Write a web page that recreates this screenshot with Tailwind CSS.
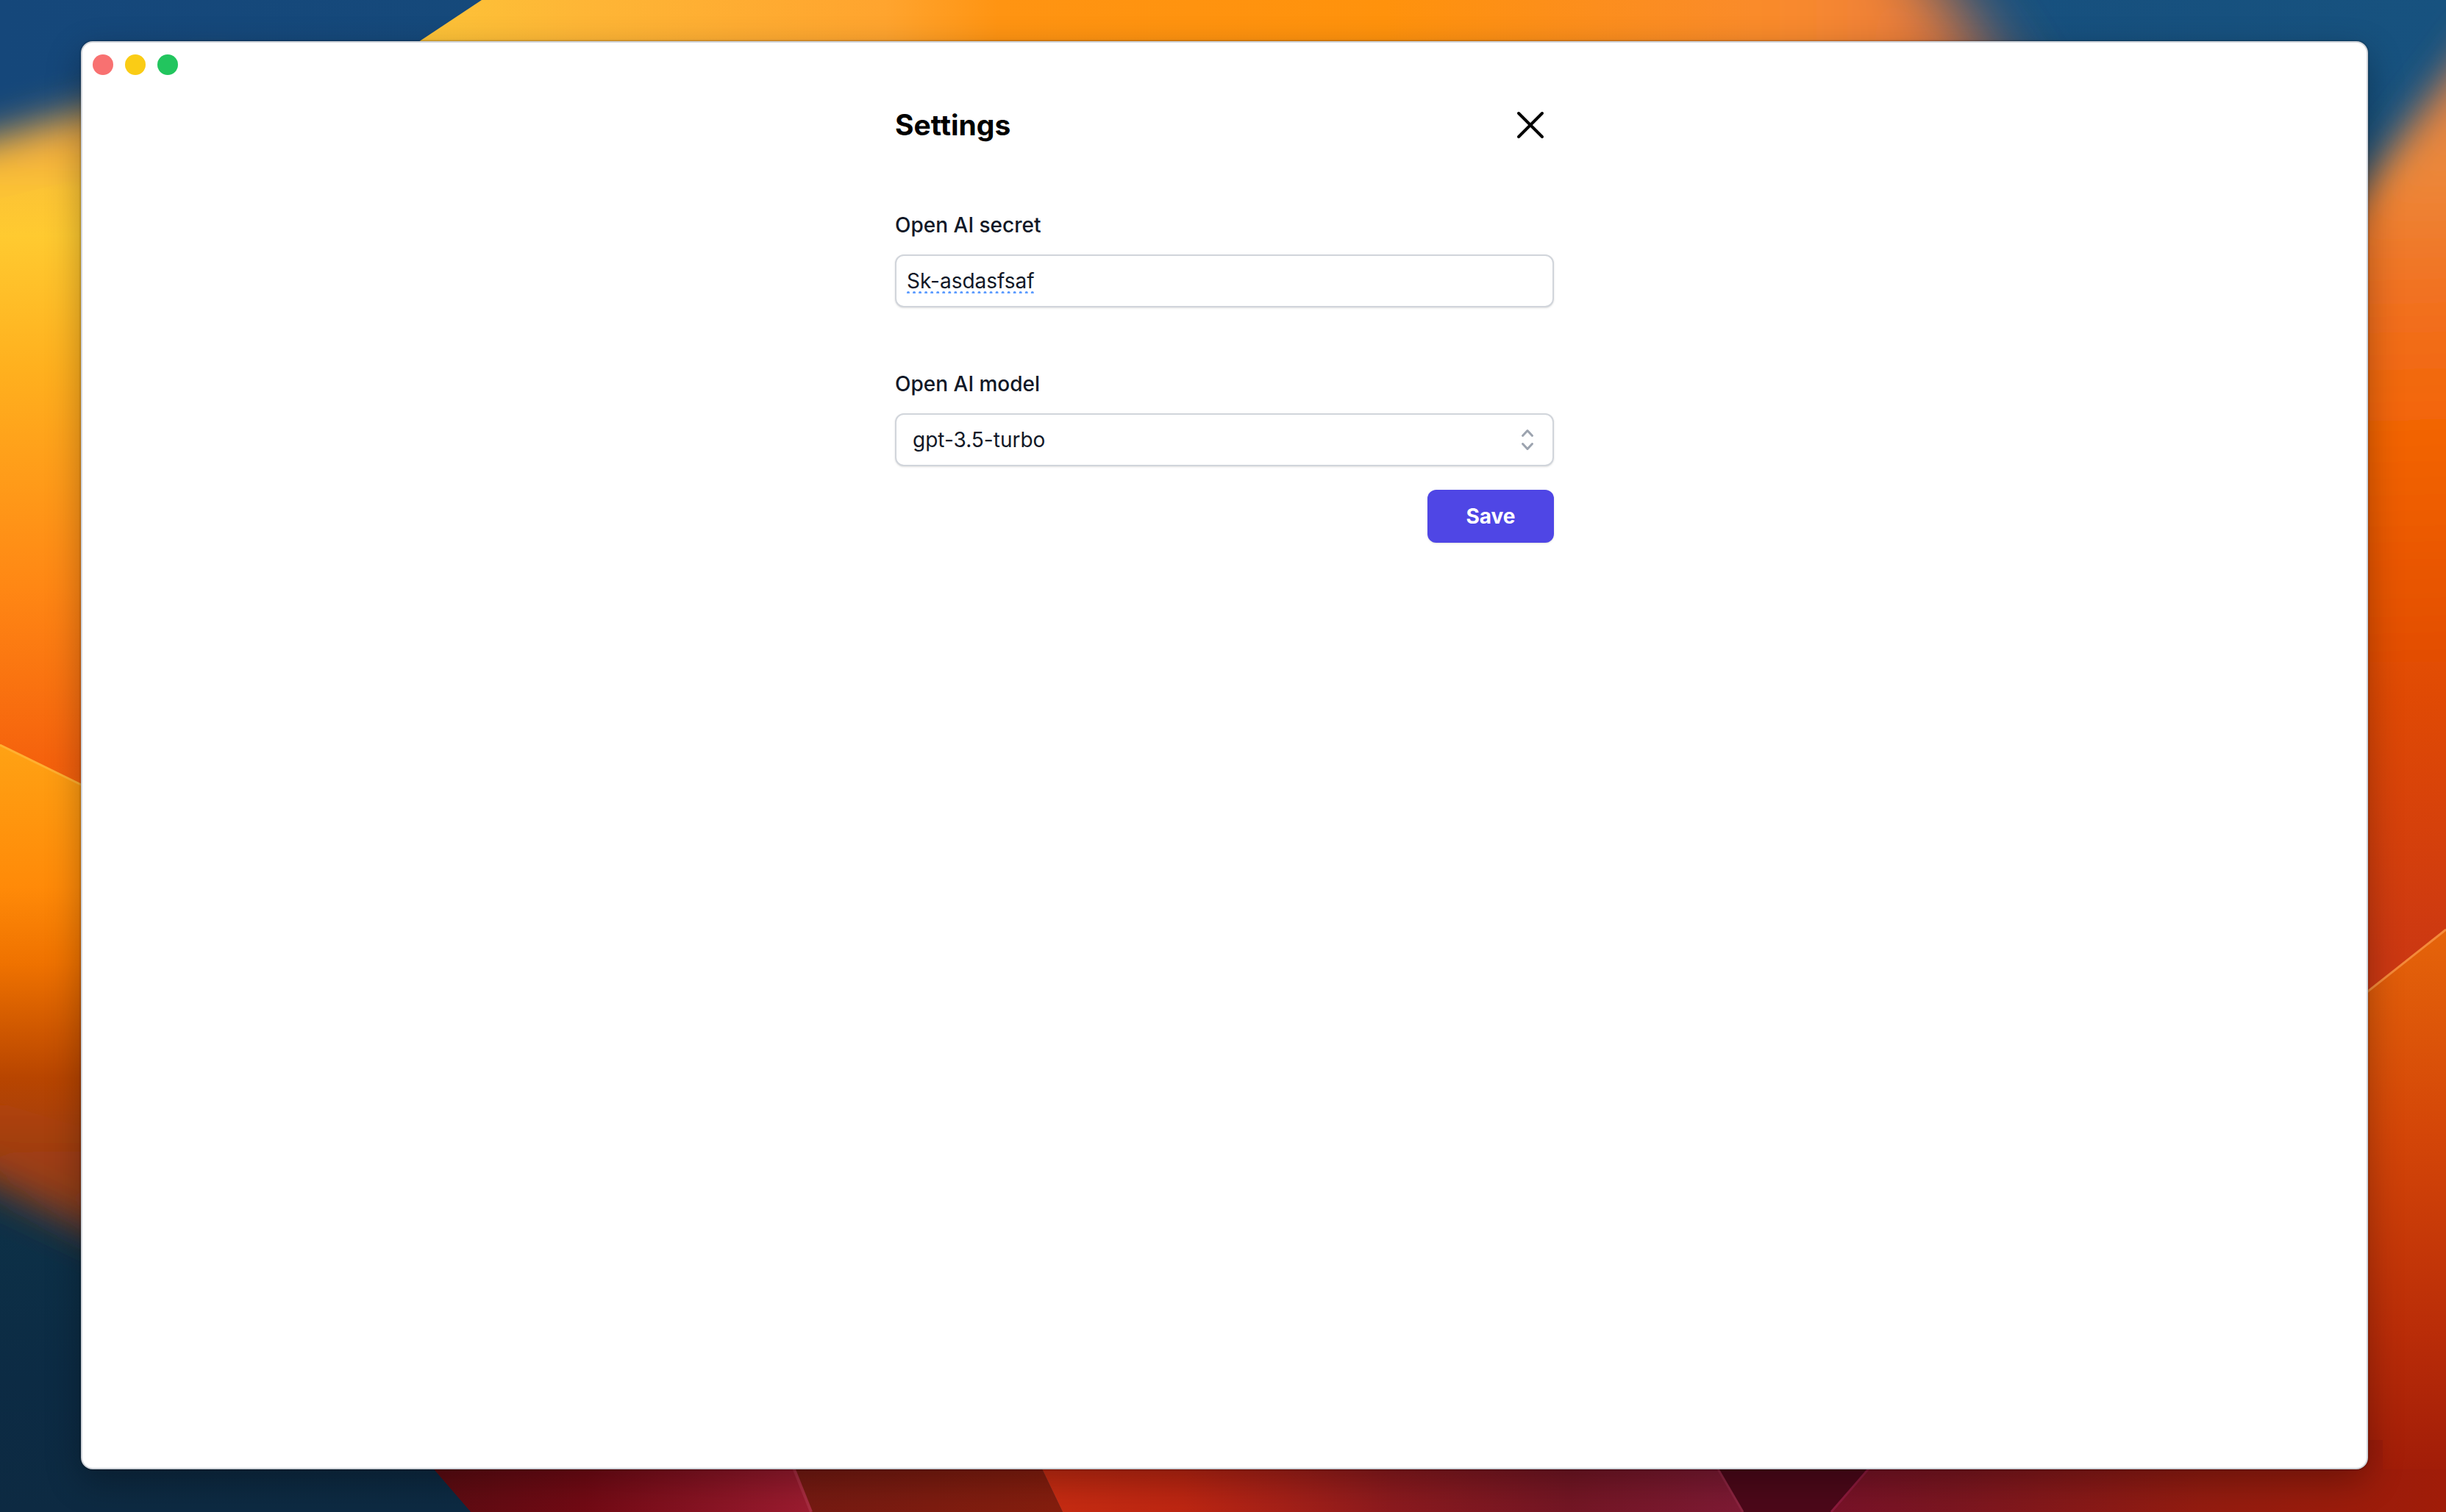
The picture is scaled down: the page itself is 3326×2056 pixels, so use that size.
<!DOCTYPE html>
<html lang="en">
<head>
<meta charset="utf-8">
<meta name="viewport" content="width=device-width, initial-scale=1">
<title>Settings</title>
<script src="https://cdn.jsdelivr.net/npm/@tailwindcss/browser@4"></script>
</head>
<body class="relative isolate flex min-h-screen flex-col overflow-x-hidden bg-[#15477a] pt-14 pr-[106px] pb-[58px] pl-[110px] font-['Inter',sans-serif] text-[28px] leading-10 text-[#111827]">

<!-- Desktop wallpaper -->
<svg class="absolute inset-0 -z-10 h-full w-full" viewBox="0 0 3326 2056" preserveAspectRatio="none" aria-hidden="true">
  <defs>
    <linearGradient id="sky" gradientUnits="userSpaceOnUse" x1="0" y1="0" x2="3326" y2="0">
      <stop offset="0" stop-color="#15477a"/><stop offset="1" stop-color="#17527f"/>
    </linearGradient>
    <linearGradient id="sea" gradientUnits="userSpaceOnUse" x1="0" y1="1600" x2="0" y2="2056">
      <stop offset="0" stop-color="#0d3248"/><stop offset=".6" stop-color="#0c2b44"/><stop offset="1" stop-color="#0d2a42"/>
    </linearGradient>
    <linearGradient id="leftUpper" gradientUnits="userSpaceOnUse" x1="0" y1="190" x2="0" y2="1060">
      <stop offset="0" stop-color="#f0a840"/><stop offset=".08" stop-color="#fcc434"/><stop offset=".15" stop-color="#ffca30"/><stop offset=".36" stop-color="#ffb01e"/><stop offset=".7" stop-color="#ff8714"/><stop offset="1" stop-color="#f45e0c"/>
    </linearGradient>
    <linearGradient id="leftLower" gradientUnits="userSpaceOnUse" x1="0" y1="1012" x2="0" y2="1660">
      <stop offset="0" stop-color="#ffa214"/><stop offset=".3" stop-color="#ff8a08"/><stop offset=".46" stop-color="#ef7200"/><stop offset=".7" stop-color="#b84500"/><stop offset=".88" stop-color="#9c3c14"/><stop offset="1" stop-color="#8a3c20"/>
    </linearGradient>
    <linearGradient id="top" gradientUnits="userSpaceOnUse" x1="570" y1="0" x2="2760" y2="0">
      <stop offset="0" stop-color="#fdc338"/><stop offset=".1" stop-color="#feb636"/><stop offset=".29" stop-color="#ffa42e"/><stop offset=".36" stop-color="#ff9412"/><stop offset=".6" stop-color="#ff920c"/><stop offset=".86" stop-color="#f98a2e"/><stop offset="1" stop-color="#d86c48"/>
    </linearGradient>
    <linearGradient id="rightUpper" gradientUnits="userSpaceOnUse" x1="3300" y1="110" x2="3326" y2="1300">
      <stop offset="0" stop-color="#d98048"/><stop offset=".1" stop-color="#ec883a"/><stop offset=".25" stop-color="#f27020"/><stop offset=".4" stop-color="#f36404"/><stop offset=".7" stop-color="#e04a04"/><stop offset="1" stop-color="#cc3812"/>
    </linearGradient>
    <linearGradient id="rightLower" gradientUnits="userSpaceOnUse" x1="0" y1="1263" x2="0" y2="2056">
      <stop offset="0" stop-color="#e5640a"/><stop offset=".35" stop-color="#d44608"/><stop offset=".7" stop-color="#b92c08"/><stop offset="1" stop-color="#9a1808"/>
    </linearGradient>
    <linearGradient id="crimson" gradientUnits="userSpaceOnUse" x1="590" y1="0" x2="1103" y2="0">
      <stop offset="0" stop-color="#5c0c12"/><stop offset=".4" stop-color="#720a14"/><stop offset="1" stop-color="#9c1c30"/>
    </linearGradient>
    <linearGradient id="brown" gradientUnits="userSpaceOnUse" x1="1080" y1="0" x2="1445" y2="0">
      <stop offset="0" stop-color="#751a12"/><stop offset="1" stop-color="#861e0e"/>
    </linearGradient>
    <linearGradient id="ember" gradientUnits="userSpaceOnUse" x1="1417" y1="0" x2="2370" y2="0">
      <stop offset="0" stop-color="#c82c12"/><stop offset=".2" stop-color="#be2612"/><stop offset=".5" stop-color="#8c1a1e"/><stop offset=".75" stop-color="#741624"/><stop offset="1" stop-color="#7e1a34"/>
    </linearGradient>
    <linearGradient id="ruby" gradientUnits="userSpaceOnUse" x1="2490" y1="0" x2="3326" y2="0">
      <stop offset="0" stop-color="#781228"/><stop offset=".2" stop-color="#7c1620"/><stop offset=".6" stop-color="#941c10"/><stop offset="1" stop-color="#a01c08"/>
    </linearGradient>
    <filter id="soft" x="-20%" y="-20%" width="140%" height="140%"><feGaussianBlur stdDeviation="26"/></filter>
    <filter id="softer" x="-20%" y="-300%" width="140%" height="700%"><feGaussianBlur stdDeviation="56 1"/></filter>
  </defs>
  <rect width="3326" height="2056" fill="url(#sky)"/>
  <rect y="1500" width="1700" height="556" fill="url(#sea)"/>
  <path d="M-200 240 L-200 1000 L300 1000 L300 100 Z" fill="url(#leftUpper)" filter="url(#soft)"/>
  <path d="M0 270 L200 220 L200 1130 L0 1040 Z" fill="url(#leftUpper)"/>
  <path d="M-200 1100 L300 1100 L300 1760 L-200 1520 Z" fill="url(#leftLower)" filter="url(#soft)"/>
  <path d="M0 1012 L200 1110 L200 1560 L0 1500 Z" fill="url(#leftLower)"/>
  <path d="M0 1013 L200 1111" stroke="#ffb030" stroke-width="3"/>
  <path d="M1200 -20 L2640 -20 L2730 120 L1200 120 Z" fill="url(#top)" filter="url(#softer)"/>
  <path d="M655 0 L2380 0 L2380 120 L474 120 Z" fill="url(#top)"/>
  <path d="M3500 -120 L3120 375 L3120 1000 L3500 1000 Z" fill="url(#rightUpper)" filter="url(#soft)"/>
  <path d="M3120 900 H3326 V1300 H3120 Z" fill="url(#rightUpper)"/>
  <path d="M3120 1300 H3326 V1263 L3120 1426 Z" fill="#cc3812"/>
  <path d="M3326 1263 L3120 1426 V2056 H3326 Z" fill="url(#rightLower)"/>
  <path d="M3326 1264 L3120 1427" stroke="#f48a3a" stroke-width="3"/>
  <path d="M555 1958 L640 2056 H1103 L1064 1958 Z" fill="url(#crimson)"/>
  <path d="M590 1998 L540 1940 L480 2056 H640 Z" fill="url(#sea)"/>
  <path d="M1064 1958 L1103 2056 H1445 L1398 1958 Z" fill="url(#brown)"/>
  <path d="M1064 1958 L1103 2056" stroke="#a82c40" stroke-width="4"/>
  <path d="M1398 1958 L1445 2056 H2370 L2313 1958 Z" fill="url(#ember)"/>
  <path d="M2313 1958 L2370 2056 H2490 L2575 1958 Z" fill="#4c0819"/>
  <path d="M2313 1958 L2370 2056" stroke="#8c2440" stroke-width="3"/>
  <path d="M2575 1958 L2490 2056 H3326 V1998 H3240 V1958 Z" fill="url(#ruby)"/>
  <path d="M2575 1958 L2490 2056" stroke="#8c1a3c" stroke-width="3"/>
</svg>

<div class="flex grow flex-col rounded-2xl border-2 border-[#d1d5db] bg-white shadow-[0_16px_48px_rgba(0,0,0,0.3),0_0_3px_rgba(0,0,0,0.5)]">
  <div class="flex gap-4 px-3.5 pt-4">
    <button type="button" aria-label="Close window" class="size-7 rounded-full bg-[#f87171]"></button>
    <button type="button" aria-label="Minimize window" class="size-7 rounded-full bg-[#facc15]"></button>
    <button type="button" aria-label="Zoom window" class="size-7 rounded-full bg-[#22c55e]"></button>
  </div>

  <main class="mx-auto mt-9 w-full max-w-4xl">
    <header class="flex items-center justify-between">
      <h1 class="text-[39px] leading-[56px] font-bold text-black">Settings</h1>
      <button type="button" aria-label="Close settings" class="text-black">
        <svg class="size-16" viewBox="0 0 24 24" fill="none" stroke="currentColor" stroke-width="1.5" stroke-linecap="round" stroke-linejoin="round"><path d="M6 18L18 6M6 6l12 12"/></svg>
      </button>
    </header>

    <form class="mt-[84px] flex flex-col">
      <label for="secret" class="font-medium">Open AI secret</label>
      <input id="secret" type="text" value="Sk-asdasfsaf" spellcheck="false" class="mt-5 h-18 w-full rounded-xl border-2 border-[#d1d5db] bg-white px-3.5 underline decoration-[#5b9bff] decoration-dotted decoration-4 underline-offset-4 shadow-sm outline-none">

      <label for="model" class="mt-[84px] font-medium">Open AI model</label>
      <div class="mt-5 grid items-center">
        <select id="model" class="col-start-1 row-start-1 h-18 w-full appearance-none rounded-xl border-2 border-[#d1d5db] bg-white pr-16 pl-[22px] shadow-sm outline-none">
          <option>gpt-3.5-turbo</option>
          <option>gpt-4</option>
        </select>
        <svg class="pointer-events-none col-start-1 row-start-1 mr-4 size-10 justify-self-end text-[#9ca3af]" viewBox="0 0 20 20" fill="currentColor" aria-hidden="true"><path fill-rule="evenodd" clip-rule="evenodd" d="M10 3a.75.75 0 01.55.24l3.25 3.5a.75.75 0 11-1.1 1.02L10 4.852 7.3 7.76a.75.75 0 01-1.1-1.02l3.25-3.5A.75.75 0 0110 3zm-3.76 9.2a.75.75 0 011.06.04l2.7 2.908 2.7-2.908a.75.75 0 111.1 1.02l-3.25 3.5a.75.75 0 01-1.1 0l-3.25-3.5a.75.75 0 01.04-1.06z"/></svg>
      </div>

      <button type="submit" class="mt-8 h-18 w-43 self-end rounded-xl bg-[#4f46e5] font-bold text-white shadow-sm">Save</button>
    </form>
  </main>
</div>
</body>
</html>
